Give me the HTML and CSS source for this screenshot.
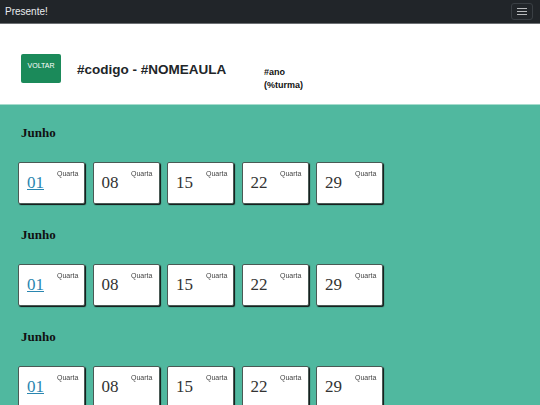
FILE: index.html
```html
<!DOCTYPE html>
<html lang="pt-BR">
<head>
  <meta charset="UTF-8" />
  <title>Presente!</title>
  <link rel="stylesheet" href="styles.css">
</head>
<body>
  <nav class="navbar">
    <span class="brand">Presente!</span>
    <button class="toggler" aria-label="menu">
      <span></span><span></span><span></span>
    </button>
  </nav>

  <header class="aula">
    <a class="btn-voltar" href="#">VOLTAR</a>
    <h2 class="titulo">#codigo - #NOMEAULA</h2>
    <div class="turma">#ano<br>(%turma)</div>
  </header>

  <main class="calendario">
    <section class="mes">
      <h5>Junho</h5>
      <div class="dias">
        <div class="dia"><a href="#" class="num link">01</a><span class="semana">Quarta</span></div>
        <div class="dia"><span class="num">08</span><span class="semana">Quarta</span></div>
        <div class="dia"><span class="num">15</span><span class="semana">Quarta</span></div>
        <div class="dia"><span class="num">22</span><span class="semana">Quarta</span></div>
        <div class="dia"><span class="num">29</span><span class="semana">Quarta</span></div>
      </div>
    </section>
    <section class="mes">
      <h5>Junho</h5>
      <div class="dias">
        <div class="dia"><a href="#" class="num link">01</a><span class="semana">Quarta</span></div>
        <div class="dia"><span class="num">08</span><span class="semana">Quarta</span></div>
        <div class="dia"><span class="num">15</span><span class="semana">Quarta</span></div>
        <div class="dia"><span class="num">22</span><span class="semana">Quarta</span></div>
        <div class="dia"><span class="num">29</span><span class="semana">Quarta</span></div>
      </div>
    </section>
    <section class="mes">
      <h5>Junho</h5>
      <div class="dias">
        <div class="dia"><a href="#" class="num link">01</a><span class="semana">Quarta</span></div>
        <div class="dia"><span class="num">08</span><span class="semana">Quarta</span></div>
        <div class="dia"><span class="num">15</span><span class="semana">Quarta</span></div>
        <div class="dia"><span class="num">22</span><span class="semana">Quarta</span></div>
        <div class="dia"><span class="num">29</span><span class="semana">Quarta</span></div>
      </div>
    </section>
  </main>
</body>
</html>
```

FILE: styles.css
```css
body {
  margin: 0;
  font-family: "Liberation Sans", Arial, sans-serif;
  background: #50b89f;
}
.navbar {
  height: 23px;
  background: #212529;
  border-bottom: 1px solid #6c6f73;
  display: flex;
  align-items: center;
  justify-content: space-between;
  padding: 0 7px 0 5px;
}
.brand {
  color: #e9ecef;
  font-size: 10px;
}
.toggler {
  width: 22px;
  height: 17px;
  background: transparent;
  border: 1px solid #3a3f44;
  border-radius: 3px;
  display: flex;
  flex-direction: column;
  align-items: center;
  justify-content: center;
  gap: 2px;
  padding: 0;
}
.toggler span {
  display: block;
  width: 10px;
  height: 1px;
  background: #b8babc;
}
.aula {
  background: #fff;
  height: 80px;
  display: flex;
  align-items: flex-start;
  padding-left: 21px;
  border-bottom: 1px solid #a6dccd;
}
.btn-voltar {
  margin-top: 30px;
  width: 40px;
  height: 29px;
  box-sizing: border-box;
  padding-top: 8px;
  background: #1b8a5a;
  border-radius: 2px;
  color: #fff;
  font-size: 7px;
  text-align: center;
  text-decoration: none;
}
.titulo {
  margin: 38px 0 0 16px;
  width: 187px;
  font-size: 13.5px;
  font-weight: bold;
  color: #212529;
}
.turma {
  margin-top: 42px;
  font-size: 9px;
  font-weight: bold;
  line-height: 13px;
  color: #111;
}
.calendario {
  padding: 20px 0 0 18px;
}
.mes {
  margin-bottom: 23px;
}
.mes h5 {
  margin: 0 0 0 3px;
  font-family: "Liberation Serif", "Times New Roman", serif;
  font-size: 13px;
  line-height: 16px;
  color: #111;
}
.dias {
  display: flex;
  gap: 7.5px;
  margin-top: 21px;
}
.dia {
  position: relative;
  width: 67px;
  height: 42px;
  box-sizing: border-box;
  background: #fff;
  border: 1px solid #4a5a55;
  border-radius: 2px;
  box-shadow: 1px 1px 1px #111;
}
.num {
  position: absolute;
  left: 8px;
  top: 10px;
  font-family: "Liberation Serif", "Times New Roman", serif;
  font-size: 17px;
  color: #333;
}
.num.link {
  color: #2a86b0;
  text-decoration: underline;
}
.semana {
  position: absolute;
  right: 6px;
  top: 7px;
  font-size: 7px;
  color: #444;
  will-change: transform;
  transform: translateZ(0);
}
```
